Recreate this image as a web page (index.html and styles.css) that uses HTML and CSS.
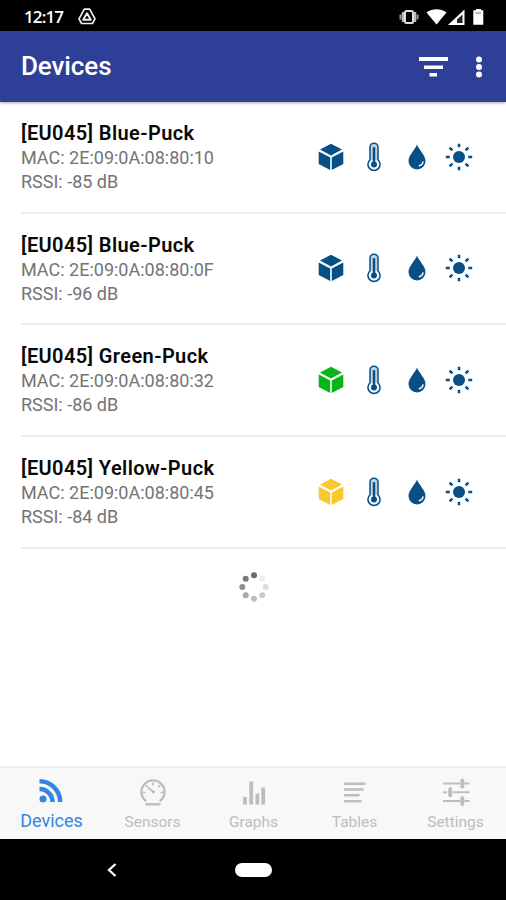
FILE: index.html
```html
<!DOCTYPE html>
<html lang="en">
<head>
<meta charset="utf-8">
<title>Devices</title>
<link rel="stylesheet" href="styles.css">
</head>
<body>
<svg class="defs" aria-hidden="true">
  <symbol id="cube" viewBox="0 0 26 28">
    <path d="M13 .8 24 6.6 13 12.5 2 6.6Z M.7 8.4 12.2 14.5V27L.7 21Z M25.3 8.4 13.8 14.5V27L25.3 21Z"/>
  </symbol>
  <symbol id="thermo" viewBox="0 0 16 30">
    <path d="M4 17.800V5.200a4 4 0 0 1 8 0v12.600a6.100 6.100 0 1 1-8 0Z" fill="#c3d3e0" stroke="currentColor" stroke-width="1.500"/>
    <circle cx="8" cy="22.400" r="4.900" fill="#fff"/>
    <path d="M8 5.200V21" stroke="currentColor" stroke-width="2.500"/>
    <circle cx="8" cy="22.400" r="3"/>
  </symbol>
  <symbol id="drop" viewBox="0 0 18 26">
    <path d="M9 .5C7.400 5.500.5 11 .5 17a8.500 8.500 0 0 0 17 0C17.500 11 10.600 5.500 9 .5Z"/>
    <path d="M15 18c-.3 1.900-1.500 3.200-3.700 3.700" fill="none" stroke="#fff" stroke-width="1.500" stroke-linecap="round"/>
  </symbol>
  <symbol id="sun" viewBox="0 0 28 28">
    <circle cx="14" cy="14" r="6"/>
    <path d="M14 .8v3.400M14 23.800v3.400M.8 14h4M23.200 14h4M4.600 4.600l2.800 2.800M20.600 20.600l2.800 2.800M23.400 4.600l-2.800 2.800M7.400 20.600l-2.800 2.800" stroke="currentColor" stroke-width="2.500"/>
  </symbol>
</svg>
<div class="screen">
  <div class="status">
    <span class="clock">12:17</span>
    <svg class="drive" width="18" height="17" viewBox="0 0 18 17" fill="none" stroke="#eee" stroke-linejoin="round"><path d="M6.300 1.200h5.400L17 10.800l-2.600 4.700H3.600L1 10.800Z" stroke-width="1.700"/><path d="M9 5.300 12.800 11.700H5.200Z" stroke-width="2"/></svg>
    <svg class="system" width="88" height="20" viewBox="0 0 88 20" fill="#fff">
      <path d="M4 5v10M16 5v10" stroke="#bbb" stroke-width="2.500"/>
      <path d="M1.500 7.500v5M18.500 7.500v5" stroke="#999" stroke-width="2"/>
      <rect x="6" y="4" width="8" height="12" rx="1.500" fill="#000" stroke="#ddd" stroke-width="2"/>
      <path d="M27.500 5.500C33.500 1.300 41.500 1.300 47.500 5.500L37.500 17.500Z"/>
      <path d="M65.500 2.500V18H49Z"/><path d="M63.500 7.500V16H58V12.500Z" fill="#222"/>
      <path d="M77 3.300V2h5v1.300h2.300v14.500H74.300V3.300Z"/><path d="M76.500 6h5.500" stroke="#777" stroke-width="1"/>
    </svg>
  </div>
  <header class="appbar">
    <h1>Devices</h1>
    <svg class="filter" width="30" height="22" viewBox="0 0 30 22" fill="#fff"><path d="M1 1h29v4H1ZM6 9.500h19v3.500H6ZM11.500 17h7.500v3.500H11.500Z"/></svg>
    <svg class="more" width="8" height="22" viewBox="0 0 8 22" fill="#fff"><circle cx="4" cy="3.500" r="3"/><circle cx="4" cy="11" r="3"/><circle cx="4" cy="18.500" r="3"/></svg>
  </header>
  <main class="list">
    <article class="device">
      <div class="info"><h2>[EU045] Blue-Puck</h2><p>MAC: 2E:09:0A:08:80:10</p><p class="rssi">RSSI: -85 dB</p></div>
      <div class="icons"><svg class="cube"><use href="#cube"/></svg><svg class="thermo"><use href="#thermo"/></svg><svg class="drop"><use href="#drop"/></svg><svg class="sun"><use href="#sun"/></svg></div>
    </article>
    <article class="device">
      <div class="info"><h2>[EU045] Blue-Puck</h2><p>MAC: 2E:09:0A:08:80:0F</p><p class="rssi">RSSI: -96 dB</p></div>
      <div class="icons"><svg class="cube"><use href="#cube"/></svg><svg class="thermo"><use href="#thermo"/></svg><svg class="drop"><use href="#drop"/></svg><svg class="sun"><use href="#sun"/></svg></div>
    </article>
    <article class="device">
      <div class="info"><h2>[EU045] Green-Puck</h2><p>MAC: 2E:09:0A:08:80:32</p><p class="rssi">RSSI: -86 dB</p></div>
      <div class="icons"><svg class="cube green"><use href="#cube"/></svg><svg class="thermo"><use href="#thermo"/></svg><svg class="drop"><use href="#drop"/></svg><svg class="sun"><use href="#sun"/></svg></div>
    </article>
    <article class="device">
      <div class="info"><h2>[EU045] Yellow-Puck</h2><p>MAC: 2E:09:0A:08:80:45</p><p class="rssi">RSSI: -84 dB</p></div>
      <div class="icons"><svg class="cube yellow"><use href="#cube"/></svg><svg class="thermo"><use href="#thermo"/></svg><svg class="drop"><use href="#drop"/></svg><svg class="sun"><use href="#sun"/></svg></div>
    </article>
    <svg class="spinner" width="32" height="32" viewBox="0 0 32 32">
      <circle cx="16" cy="4.300" r="3" fill="#686a70"/><circle cx="24.300" cy="7.700" r="3" fill="#eee"/><circle cx="27.700" cy="16" r="3" fill="#dcdcdc"/><circle cx="24.300" cy="24.300" r="3" fill="#c9c9c9"/><circle cx="16" cy="27.700" r="3" fill="#bdbdbd"/><circle cx="7.700" cy="24.300" r="3" fill="#a8a9ab"/><circle cx="4.300" cy="16" r="3" fill="#8d8f92"/><circle cx="7.700" cy="7.700" r="3" fill="#77797e"/>
    </svg>
  </main>
  <nav class="tabs">
    <div class="tab active"><svg width="28" height="28" viewBox="0 0 28 28"><circle cx="5" cy="22" r="3.500" fill="currentColor"/><path d="M1.500 12A13 13 0 0 1 14.500 25M1.500 4.300A20.700 20.700 0 0 1 22.200 25" fill="none" stroke="currentColor" stroke-width="4.500"/></svg><span>Devices</span></div>
    <div class="tab"><svg width="28" height="28" viewBox="0 0 28 28" fill="none" stroke="currentColor"><path d="M7.300 23.200A11.500 11.500 0 1 1 20.700 23.200" stroke-width="2.400"/><path d="M14 4.500v3M3.500 14.500h3M21.500 14.500h3M6.800 7.300 8.600 9.100M21.200 7.300 19.400 9.100M9 9.500l6 5" stroke-width="1.700"/><circle cx="14.500" cy="14" r="1.500" fill="currentColor" stroke="none"/><path d="M6.500 26.300h15" stroke-width="2.500"/></svg><span>Sensors</span></div>
    <div class="tab"><svg width="28" height="28" viewBox="0 0 28 28" fill="none" stroke="currentColor" stroke-width="3.800"><path d="M5 19v7.500M11.200 3.500V26.500M17.400 15.500V26.500M23.200 9.500V26.500"/></svg><span>Graphs</span></div>
    <div class="tab"><svg width="28" height="28" viewBox="0 0 28 28" fill="none" stroke="currentColor" stroke-width="2.600"><path d="M3 5.700h21.500M3 11.500h19.500M3 17.300h15.500M3 23.300h17.500"/></svg><span>Tables</span></div>
    <div class="tab"><svg width="28" height="28" viewBox="0 0 28 28" fill="none" stroke="currentColor" stroke-width="1.900"><path d="M1 5.500h17M22.500 5.500h5M1 14.300h4M11 14.300h16.500M1 23h17M22.500 23h5"/><path d="M20.300 2.500v6M8.200 11.300v6M20.300 20v6" stroke-width="4" stroke-linecap="round"/></svg><span>Settings</span></div>
  </nav>
  <footer class="sysnav">
    <svg class="back" width="10" height="14" viewBox="0 0 10 14"><path d="M8.500 1 2 7l6.500 6" fill="none" stroke="#fff" stroke-width="2.300"/></svg>
    <span class="pill"></span>
  </footer>
</div>
</body>
</html>
```
FILE: styles.css
```css
* { box-sizing: border-box; }
body { margin: 0; font-family: Roboto, "Liberation Sans", sans-serif; background: #fff; }
h1, h2, p { margin: 0; }
svg { display: block; flex: none; }
.defs { display: none; }
.screen { width: 506px; height: 900px; display: flex; flex-direction: column; overflow: hidden; }
.status { height: 31px; flex: none; background: #000; color: #fff; display: flex; align-items: center; padding: 2px 19px 0 24px; }
.clock { width: 54px; font: 600 17px/20px "Open Sans", Roboto, sans-serif; letter-spacing: -.9px; }
.system { margin-left: auto; }
.appbar { height: 71px; flex: none; background: #2e3f98; color: #fff; display: flex; align-items: center; padding: 0 23px 0 21px; box-shadow: 0 1px 3px rgba(0,0,0,.35); }
h1 { flex: 1; font-size: 26px; line-height: 32px; font-weight: 500; letter-spacing: -.1px; margin-top: -2px; }
.more { margin-left: 27px; }
.list { flex: 1; }
.device { height: 111.700px; margin-left: 21px; border-bottom: 2px solid #ececec; display: flex; justify-content: space-between; padding: 19px 33px 0 0; }
h2 { font-size: 20px; line-height: 24px; font-weight: 600; letter-spacing: .4px; color: #080808; }
p { font-size: 18px; line-height: 24px; color: #747474; margin-top: 1px; }
.rssi { margin-top: 0; }
.icons { display: flex; align-items: center; height: 30px; margin-top: 20.500px; color: #075087; fill: currentColor; }
.cube { width: 26px; height: 28px; }
.thermo { width: 16px; height: 30px; margin-left: 22px; }
.drop { width: 18px; height: 26px; margin-left: 26px; }
.sun { width: 28px; height: 28px; margin-left: 19px; }
.green { color: #08b516; fill: #08b516; }
.yellow { color: #f9c72e; fill: #f9c72e; }
.spinner { margin: 22px 0 0 238px; }
.tabs { height: 73px; flex: none; display: flex; background: #f8f8f8; border-top: 2px solid #ededed; padding-left: 1px; }
.tab { flex: 1; display: flex; flex-direction: column; align-items: center; padding-top: 10px; color: #bdbdbd; font-size: 15.500px; }
.tab span { line-height: 20px; margin-top: 6px; }
.tab.active { color: #3484e4; font-size: 18px; }
.tab.active span { margin-top: 5px; }
.tab.active svg { margin-top: -1px; margin-bottom: 1px; }
.sysnav { height: 61px; flex: none; background: #000; display: flex; align-items: center; padding: 1px 0 0 107px; }
.pill { width: 37px; height: 14px; border-radius: 7px; background: #fff; margin-left: 118px; }
```
